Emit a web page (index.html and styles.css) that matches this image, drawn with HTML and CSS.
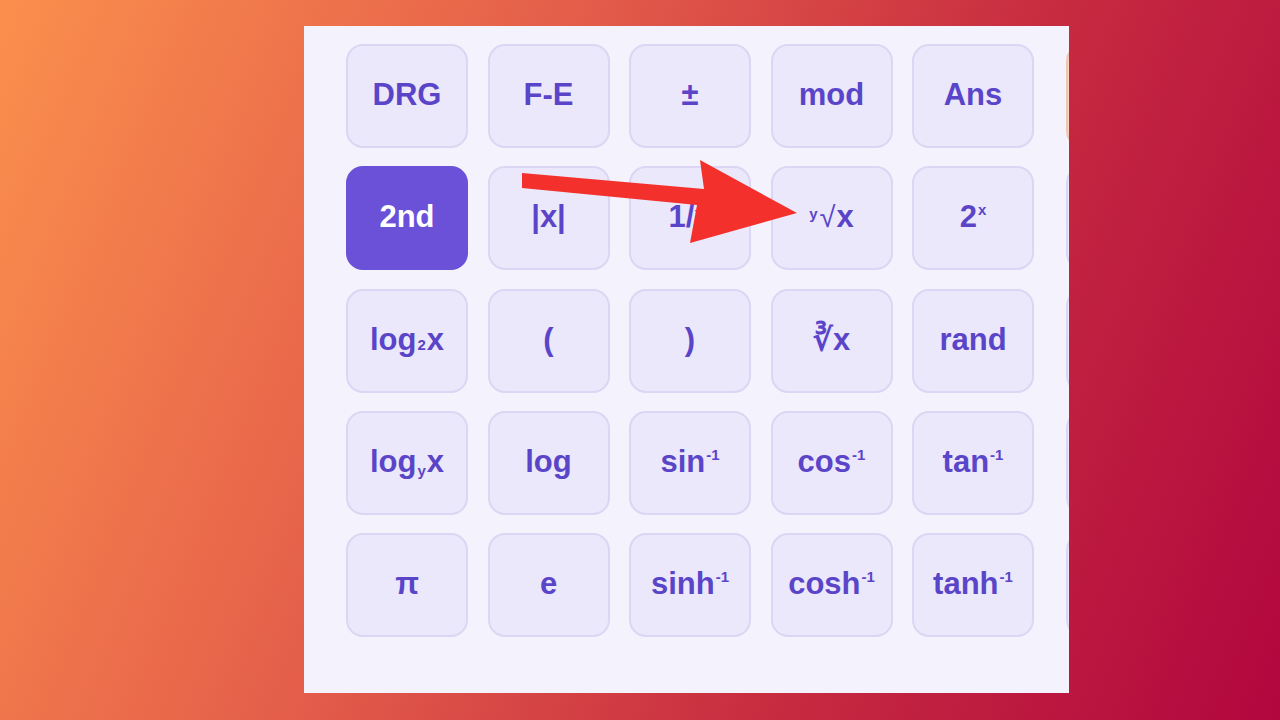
FILE: index.html
```html
<!DOCTYPE html>
<html lang="en">
  <head>
    <meta charset="UTF-8" />
    <meta name="viewport" content="width=device-width, initial-scale=1.0" />
    <title>Scientific Calculator Keys</title>
    <link rel="stylesheet" href="styles.css">
  </head>
  <body>
    <div class="stage">
      <div class="keypad">
        <div class="keys">
          <button class="key">DRG</button>
          <button class="key">F-E</button>
          <button class="key">±</button>
          <button class="key">mod</button>
          <button class="key">Ans</button>
          <button class="key peek warm"></button>

          <button class="key active">2nd</button>
          <button class="key">|x|</button>
          <button class="key">1/x</button>
          <button class="key"><span><sup class="root-index">y</sup><span class="radical">√</span>x</span></button>
          <button class="key"><span>2<sup>x</sup></span></button>
          <button class="key peek"></button>

          <button class="key"><span>log<sub>2</sub>x</span></button>
          <button class="key">(</button>
          <button class="key">)</button>
          <button class="key">∛x</button>
          <button class="key">rand</button>
          <button class="key peek"></button>

          <button class="key"><span>log<sub class="low">y</sub>x</span></button>
          <button class="key">log</button>
          <button class="key"><span>sin<sup>-1</sup></span></button>
          <button class="key"><span>cos<sup>-1</sup></span></button>
          <button class="key"><span>tan<sup>-1</sup></span></button>
          <button class="key peek"></button>

          <button class="key">π</button>
          <button class="key">e</button>
          <button class="key"><span>sinh<sup>-1</sup></span></button>
          <button class="key"><span>cosh<sup>-1</sup></span></button>
          <button class="key"><span>tanh<sup>-1</sup></span></button>
          <button class="key peek"></button>
        </div>
      </div>

      <!-- pointer drawn over the keypad -->
      <svg class="pointer" width="1280" height="720" viewBox="0 0 1280 720">
        <polygon
          points="522,173 704,189 700,160 797,213 690,243 697,205 522,188"
          fill="#f3302c"
        />
      </svg>
    </div>
  </body>
</html>
```

FILE: styles.css
```css
* {
  margin: 0;
  padding: 0;
  box-sizing: border-box;
}

body {
  width: 1280px;
  height: 720px;
  overflow: hidden;
  font-family: "Liberation Sans", Arial, sans-serif;
  background: linear-gradient(112deg, #fb8f4d 0%, #e35c4a 38%, #c82d40 66%, #b1063f 100%);
}

.stage {
  position: relative;
  width: 1280px;
  height: 720px;
  padding: 26px 0 0 304px;
}

.keypad {
  width: 765px;
  height: 667px;
  background: #f4f2fc;
  padding: 18px 0 0 42px;
  overflow: hidden;
}

.keys {
  display: grid;
  grid-template-columns: repeat(6, 122px);
  grid-auto-rows: 104px;
  column-gap: 19.5px;
  row-gap: 18.3px;
}

.key {
  display: flex;
  justify-content: center;
  align-items: center;
  padding-bottom: 3px;
  background: #ebe8fb;
  border: 2px solid #dbd6f3;
  border-radius: 17px;
  color: #5a45c9;
  font-family: "Liberation Sans", Arial, sans-serif;
  font-size: 31px;
  font-weight: bold;
  line-height: 1;
  cursor: pointer;
}

.key.active {
  background: #6a51d8;
  border-color: #6a51d8;
  color: #fff;
}

.key.peek {
  margin-left: 12px;
}

.key.warm {
  background: #f8d6c6;
  border-color: #f3c4ae;
}

.key sup,
.key sub {
  font-size: 15px;
  line-height: 0;
}

.key sup {
  vertical-align: 12px;
  margin-left: 1px;
}

.key sub {
  vertical-align: 0;
  margin: 0 1px;
}

.key sub.low {
  vertical-align: -4px;
}

.key sup.root-index {
  vertical-align: 8px;
  margin: 0 2px 0 0;
}

.radical {
  font-weight: normal;
  font-size: 29px;
  margin-right: 1px;
}

.pointer {
  position: absolute;
  top: 0;
  left: 0;
  pointer-events: none;
}
```
